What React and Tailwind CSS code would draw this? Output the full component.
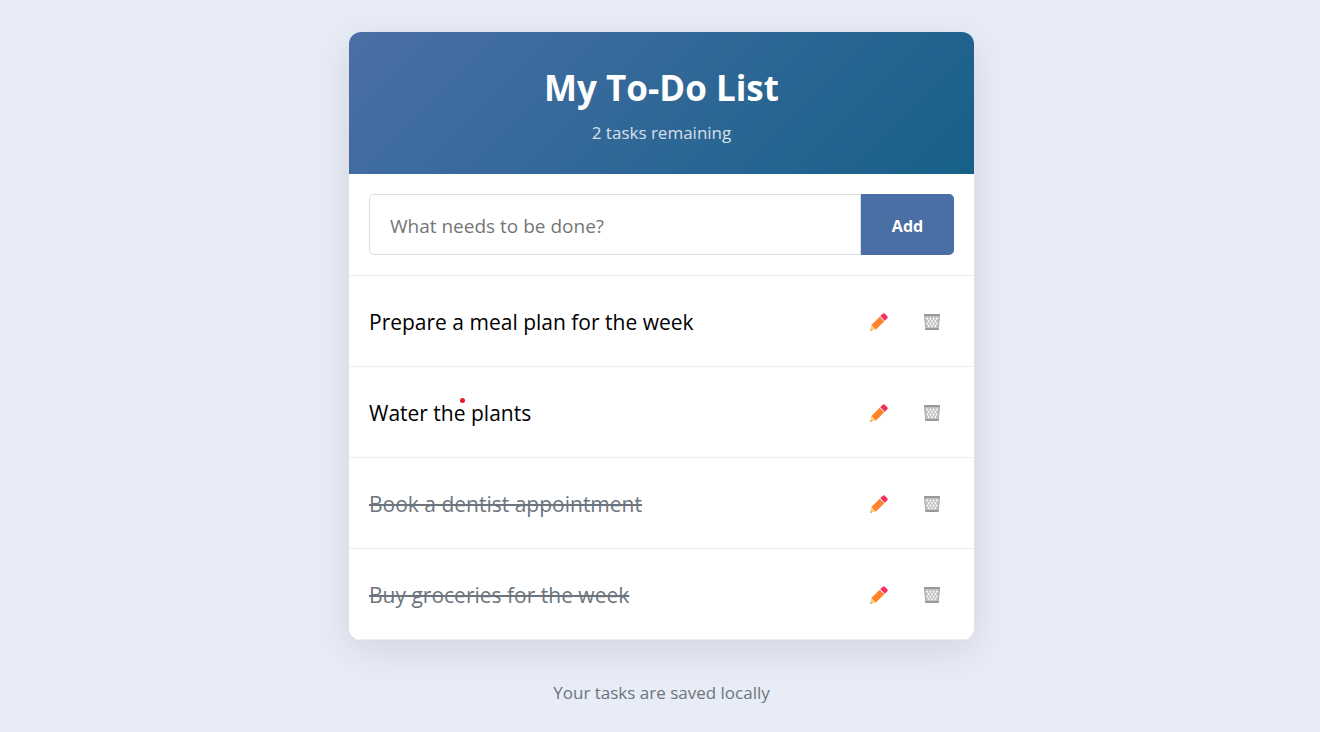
import { useState } from 'react';

const initialTasks = [
  { id: 1, text: 'Prepare a meal plan for the week', done: false },
  { id: 2, text: 'Water the plants', done: false, marked: true },
  { id: 3, text: 'Book a dentist appointment', done: true },
  { id: 4, text: 'Buy groceries for the week', done: true },
];

function PencilIcon() {
  return (
    <svg width="18" height="18" viewBox="0 0 18 18" aria-hidden="true">
      <path d="M1.4 12L6 16.6L1.2 17.7Q.1 17.9.3 16.6Z" fill="#ffce7c" />
      <path d="M.5 16L2 17.5L1.2 17.7Q.1 17.9.3 16.7Z" fill="#a08c76" />
      <path d="M1.4 12L9.7 3.7L14.3 8.3L6 16.6Z" fill="#ff822d" />
      <path d="M9.7 3.7L10.3 3.1L14.9 7.7L14.3 8.3Z" fill="#e0c8d0" />
      <path d="M10.3 3.1L12.8.7Q13.8-.2 14.8.7L17.3 3.2Q18.2 4.2 17.3 5.2L14.9 7.7Z" fill="#f92f60" />
    </svg>
  );
}

function BinIcon() {
  return (
    <svg width="18" height="18" viewBox="0 0 18 18" aria-hidden="true">
      <path d="M1.4 3L16.6 3L15.4 16H2.6Z" fill="#c0c0c0" />
      <g fill="#f7f7f7">
        <path d="M4.1 4l1.1 1.6-1.1 1.6L3 5.6zM7.3 4l1.1 1.6-1.1 1.6-1.1-1.6zM10.6 4l1.1 1.6-1.1 1.6-1.1-1.6zM13.9 4L15 5.6l-1.1 1.6-1.1-1.6z" />
        <path d="M5.7 6.5l1.1 1.6-1.1 1.6-1.1-1.6zM9 6.5l1.1 1.6L9 9.7 7.9 8.1zM12.3 6.5l1.1 1.6-1.1 1.6-1.1-1.6z" />
        <path d="M4.2 9l1 1.6-1 1.6-.7-1.6zM7.3 9l1.1 1.6-1.1 1.6-1.1-1.6zM10.6 9l1.1 1.6-1.1 1.6-1.1-1.6zM13.8 9l.7 1.6-.7 1.6-1-1.6z" />
        <path d="M5.7 11.5l1.1 1.6-1.1 1.6-1.1-1.6zM9 11.5l1.1 1.6L9 14.7l-1.1-1.6zM12.3 11.5l1.1 1.6-1.1 1.6-1.1-1.6z" />
      </g>
      <path d="M1.5 3L2.8 16M16.5 3L15.2 16" stroke="#b0b0b0" strokeWidth="1" fill="none" />
      <rect x="1" y="1" width="16" height="2" rx=".5" fill="#999999" />
      <rect x="2.2" y="15" width="13.6" height="2" rx=".5" fill="#999999" />
    </svg>
  );
}

function TaskRow({ task, onToggle, onEdit, onDelete }) {
  return (
    <li className="flex items-center border-b border-[#eeeeee] px-5 pt-[31px] pb-[29px]">
      <button
        type="button"
        onClick={onToggle}
        className={
          task.done
            ? 'flex-1 text-left text-[21px] leading-[30px] text-[#6c757d] line-through decoration-2'
            : 'flex-1 text-left text-[21px] leading-[30px] text-black'
        }
      >
        <span className="relative">
          {task.text}
          {task.marked && (
            <span className="absolute -top-px left-[91px] size-[5px] rounded-full bg-[#e31b23]" />
          )}
        </span>
      </button>
      <div className="flex gap-[9px]">
        <button type="button" aria-label="Edit task" onClick={onEdit} className="flex h-[30px] w-11 items-center justify-center">
          <PencilIcon />
        </button>
        <button type="button" aria-label="Delete task" onClick={onDelete} className="flex h-[30px] w-11 items-center justify-center">
          <BinIcon />
        </button>
      </div>
    </li>
  );
}

export default function App() {
  const [tasks, setTasks] = useState(initialTasks);
  const [draft, setDraft] = useState('');
  const remaining = tasks.filter((t) => !t.done).length;

  const add = (e) => {
    e.preventDefault();
    const text = draft.trim();
    if (!text) return;
    setTasks([{ id: Date.now(), text, done: false }, ...tasks]);
    setDraft('');
  };
  const toggle = (id) => setTasks(tasks.map((t) => (t.id === id ? { ...t, done: !t.done } : t)));
  const remove = (id) => setTasks(tasks.filter((t) => t.id !== id));
  const edit = (task) => {
    setDraft(task.text);
    remove(task.id);
  };

  return (
    <div className="min-h-screen bg-[#e8ecf7] pt-8 pl-[3px] font-['Open_Sans','Noto_Sans',sans-serif]">
      <main className="mx-auto w-full max-w-[625px]">
        <section className="overflow-hidden rounded-xl bg-white shadow-[0_10px_38px_rgba(0,0,0,0.1)]">
          <header className="bg-linear-[135deg,#4a6fa5,#166088] px-5 pt-8 pb-7 text-center text-white">
            <h1 className="text-[35px] leading-[48px] font-bold">My To-Do List</h1>
            <p className="mt-2 text-[17px] leading-[26px] opacity-80">{remaining} tasks remaining</p>
          </header>
          <form onSubmit={add} className="flex border-b border-[#eeeeee] p-5">
            <input
              type="text"
              aria-label="New task"
              placeholder="What needs to be done?"
              value={draft}
              onChange={(e) => setDraft(e.target.value)}
              className="h-[61px] min-w-0 flex-1 rounded-l-[5px] border border-[#dddddd] px-5 pt-0.5 text-[19px] outline-none placeholder:text-[#757575]"
            />
            <button type="submit" className="w-[93px] rounded-r-[5px] bg-[#4a6fa5] pt-0.5 text-base font-bold text-white">
              Add
            </button>
          </form>
          <ul>
            {tasks.map((task) => (
              <TaskRow
                key={task.id}
                task={task}
                onToggle={() => toggle(task.id)}
                onEdit={() => edit(task)}
                onDelete={() => remove(task.id)}
              />
            ))}
          </ul>
        </section>
        <footer className="py-10 text-center text-[17px] leading-[26px] text-[#6c757d]">
          Your tasks are saved locally
        </footer>
      </main>
    </div>
  );
}
